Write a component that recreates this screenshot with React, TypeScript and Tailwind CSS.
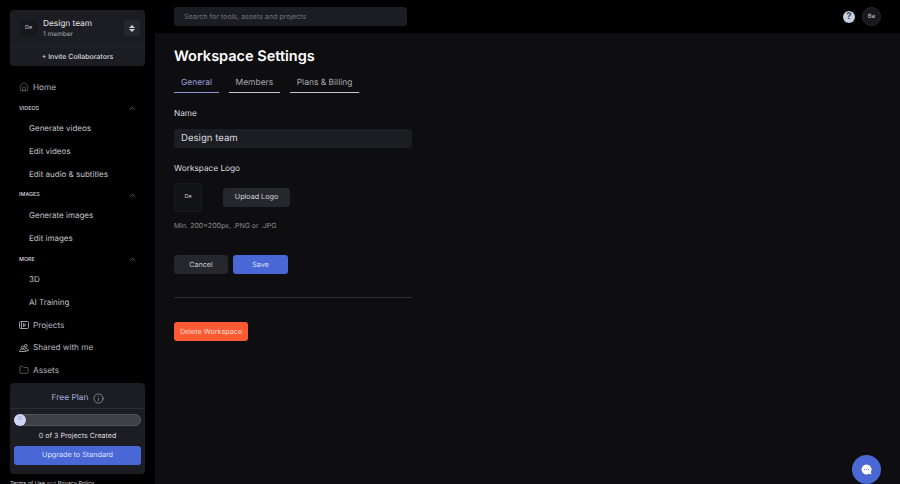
import { ChevronUp, Folder, House, Info } from "lucide-react";

function SubLink({ label }: { label: string }) {
    return <div className="h-[22.6px] pb-[1px] flex items-center pl-[29px] text-[8px] text-[#c4c5ca]">{label}</div>;
}

function Section({ label }: { label: string }) {
    return (
        <div className="h-[19px] pt-[1px] flex items-center justify-between pl-[19px] pr-[18px] text-[5.4px] font-medium text-[#d5d6da]">
            <span>{label}</span>
            <ChevronUp size={9} strokeWidth={1.5} className="text-[#9a9ba1]" />
        </div>
    );
}

function NavItem({ label, icon }: { label: string; icon: React.ReactNode }) {
    return (
        <div className="h-[22.6px] flex items-center gap-[4px] pl-[19px] text-[8.2px] text-[#b9bac0]">
            <span className="w-[10px] flex justify-center text-[#c0c1c8]">{icon}</span>
            <span>{label}</span>
        </div>
    );
}

function ProjectsIcon() {
    return (
        <svg width="10" height="10" viewBox="0 0 10 10" fill="none" stroke="currentColor" strokeWidth="0.8">
            <rect x="0.5" y="1.5" width="9" height="7" rx="1" />
            <path d="M2.5 1.5v7" />
            <path d="M4.5 3.5L6.8 5L4.5 6.5z" />
        </svg>
    );
}

function SharedIcon() {
    return (
        <svg width="10" height="10" viewBox="0 0 10 10" fill="none" stroke="currentColor" strokeWidth="0.8">
            <circle cx="3.6" cy="4.4" r="1.4" />
            <circle cx="6.8" cy="2.8" r="1.4" />
            <path d="M0.6 8.5c0-1.8 1.3-2.6 3-2.6s3 .8 3 2.6z" />
            <path d="M6 5.3c1.900 0 3.400 .7 3.400 2.500H6.900" />
        </svg>
    );
}

function Sidebar() {
    return (
        <aside className="w-[155px] h-full shrink-0 bg-black flex flex-col overflow-hidden">
            <div className="mx-[10px] mt-[10px] h-[56px] shrink-0 rounded-[4px] bg-[#1c1d22] flex flex-col">
                <div className="h-[37px] flex items-center pl-[10px] pr-[5px] border-b border-[#24252a]">
                    <div className="w-[17px] h-[17px] rounded-[3px] bg-[#17181c] flex items-center justify-center text-[5.5px] text-[#c9cacf]">De</div>
                    <div className="ml-[6px] flex-1 leading-none">
                        <div className="mt-[2px] text-[8.3px] text-[#e8e8ea]">Design team</div>
                        <div className="mt-[3px] text-[6.5px] text-[#a9aab0]">1 member</div>
                    </div>
                    <div className="w-[16px] h-[16px] rounded-[4px] bg-[#26272d] flex flex-col items-center justify-center gap-[1px]">
                        <svg width="6" height="3" viewBox="0 0 6 3"><path d="M3 0l3 3H0z" fill="#cfd0d6" /></svg>
                        <svg width="6" height="3" viewBox="0 0 6 3"><path d="M3 3L0 0h6z" fill="#cfd0d6" /></svg>
                    </div>
                </div>
                <div className="flex-1 pt-[1px] flex items-center justify-center text-[7px] font-medium text-[#d9dade]">+ Invite Collaborators</div>
            </div>
            <div className="mt-[10px] flex flex-col">
                <NavItem label="Home" icon={<House size={10} strokeWidth={1} />} />
                <Section label="VIDEOS" />
                <SubLink label="Generate videos" />
                <SubLink label="Edit videos" />
                <SubLink label="Edit audio & subtitles" />
                <Section label="IMAGES" />
                <SubLink label="Generate images" />
                <SubLink label="Edit images" />
                <Section label="MORE" />
                <SubLink label="3D" />
                <SubLink label="AI Training" />
                <NavItem label="Projects" icon={<ProjectsIcon />} />
                <NavItem label="Shared with me" icon={<SharedIcon />} />
                <NavItem label="Assets" icon={<Folder size={10} strokeWidth={1} />} />
            </div>
            <div className="mx-[10px] mt-[1px] h-[91px] shrink-0 rounded-[4px] bg-[#1c1d22] flex flex-col">
                <div className="h-[26px] pt-[6px] pl-[1px] flex items-center justify-center gap-[5px] border-b border-[#2c2d33] text-[8.4px] text-[#a9aede]">
                    <span>Free Plan</span>
                    <Info size={11} strokeWidth={1.1} className="text-[#d4d6ea]" />
                </div>
                <div className="px-[4px] pt-[5px] flex flex-col">
                    <div className="h-[12px] rounded-full bg-[#3f4046] border border-[#55565c] flex items-center">
                        <div className="w-[12px] h-[12px] -ml-[1px] rounded-full bg-[#cfd3f5] flex items-center justify-center text-[5.5px] text-[#8b8fb5]">0</div>
                    </div>
                    <div className="mt-[5px] text-center text-[7.1px] text-[#d9dade]">0 of 3 Projects Created</div>
                    <div className="mt-[5px] h-[19px] rounded-[3px] bg-[#4a67d6] flex items-center justify-center text-[7.2px] text-[#dfe4fa]">Upgrade to Standard</div>
                </div>
            </div>
            <div className="mt-[6px] pl-[10px] text-[5.5px] whitespace-nowrap text-[#d0d0d4]">
                <span>Terms of Use</span> <span className="text-[#77787e]">and</span> <span>Privacy Policy</span>
            </div>
        </aside>
    );
}

function Tab({ label, active }: { label: string; active?: boolean }) {
    return (
        <div className={`h-[23px] pt-[5px] px-[7px] flex items-center border-b-[1px] text-[8.45px] ${active ? "border-[#8f96d8] text-[#9aa0dc]" : "border-[#c8c9ce] text-[#a9aab0]"}`}>
            {label}
        </div>
    );
}

export default function App() {
    return (
        <div className="w-[900px] h-[484px] flex bg-black overflow-hidden antialiased [text-rendering:geometricPrecision] font-['Inter',sans-serif]">
            <Sidebar />
            <div className="flex-1 flex flex-col min-w-0">
                <header className="h-[33px] shrink-0 bg-black flex items-center justify-between pl-[19px] pr-[19px]">
                    <div className="w-[233px] h-[19px] rounded-[3px] bg-[#1c1d22] flex items-center pl-[10px] pt-[1px] text-[7.1px] text-[#6f7077]">
                        Search for tools, assets and projects
                    </div>
                    <div className="flex items-center gap-[7px]">
                        <div className="w-[12px] h-[12px] rounded-full bg-[#c5d0e2] flex items-center justify-center text-[9px] font-semibold text-[#33343a]">?</div>
                        <div className="w-[19px] h-[19px] rounded-full bg-[#17181c] border border-[#26272c] flex items-center justify-center text-[6px] text-[#c9cacf]">Be</div>
                    </div>
                </header>
                <main className="flex-1 relative bg-[#0e0e10] pl-[19px] pt-[15px]">
                    <h1 className="text-[14.5px] leading-[18px] font-semibold text-white">Workspace Settings</h1>
                    <div className="mt-[4px] flex gap-[9.5px]">
                        <Tab label="General" active />
                        <Tab label="Members" />
                        <Tab label="Plans & Billing" />
                    </div>
                    <div className="mt-[14px] text-[8.25px] leading-[12px] text-[#dcdde0]">Name</div>
                    <div className="mt-[10px] w-[238px] h-[19px] pt-[2px] rounded-[3px] bg-[#1c1d22] flex items-center pl-[7px] text-[9.6px] text-[#d9dade]">Design team</div>
                    <div className="mt-[14px] text-[8.25px] leading-[12px] text-[#dcdde0]">Workspace Logo</div>
                    <div className="mt-[9px] flex items-center">
                        <div className="w-[28px] h-[29px] rounded-[3px] bg-[#121316] border border-[#1a1b1f] flex items-center justify-center text-[5.5px] text-[#c9cacf]">De</div>
                        <div className="ml-[21px] w-[67px] h-[19px] rounded-[3px] bg-[#26272d] flex items-center justify-center text-[7.2px] text-[#d4d5d9]">Upload Logo</div>
                    </div>
                    <div className="mt-[9px] text-[7px] leading-[10px] text-[#8b8c92]">Min. 200×200px, .PNG or .JPG</div>
                    <div className="mt-[24px] flex gap-[5px]">
                        <div className="w-[54px] h-[19px] pt-[1px] rounded-[3px] bg-[#26272d] flex items-center justify-center text-[7.1px] text-[#c9cacf]">Cancel</div>
                        <div className="w-[55px] h-[19px] pt-[1px] rounded-[3px] bg-[#4a67d6] flex items-center justify-center text-[7.1px] text-[#dfe4fa]">Save</div>
                    </div>
                    <div className="mt-[23px] w-[238px] h-px bg-[#2f3035]" />
                    <div className="mt-[24px] w-[74px] h-[19px] pt-[1px] rounded-[3px] bg-[#fb5a33] flex items-center justify-center text-[7.2px] text-[#ffd9cf]">Delete Workspace</div>
                    <div className="absolute right-[19px] bottom-0 w-[29px] h-[29px] rounded-full bg-[#4a67d6] flex items-center justify-center">
                        <svg width="11" height="11" viewBox="0 0 11 11">
                            <path d="M5.5 0.5a5 5 0 1 0 2.600 9.300l2.400 .7-.7-2.400A5 5 0 0 0 5.500 .5z" fill="#fff" />
                            <circle cx="3.500" cy="5.500" r=".5" fill="#4a67d6" />
                            <circle cx="5.500" cy="5.500" r=".5" fill="#4a67d6" />
                            <circle cx="7.500" cy="5.500" r=".5" fill="#4a67d6" />
                        </svg>
                    </div>
                </main>
            </div>
        </div>
    );
}
